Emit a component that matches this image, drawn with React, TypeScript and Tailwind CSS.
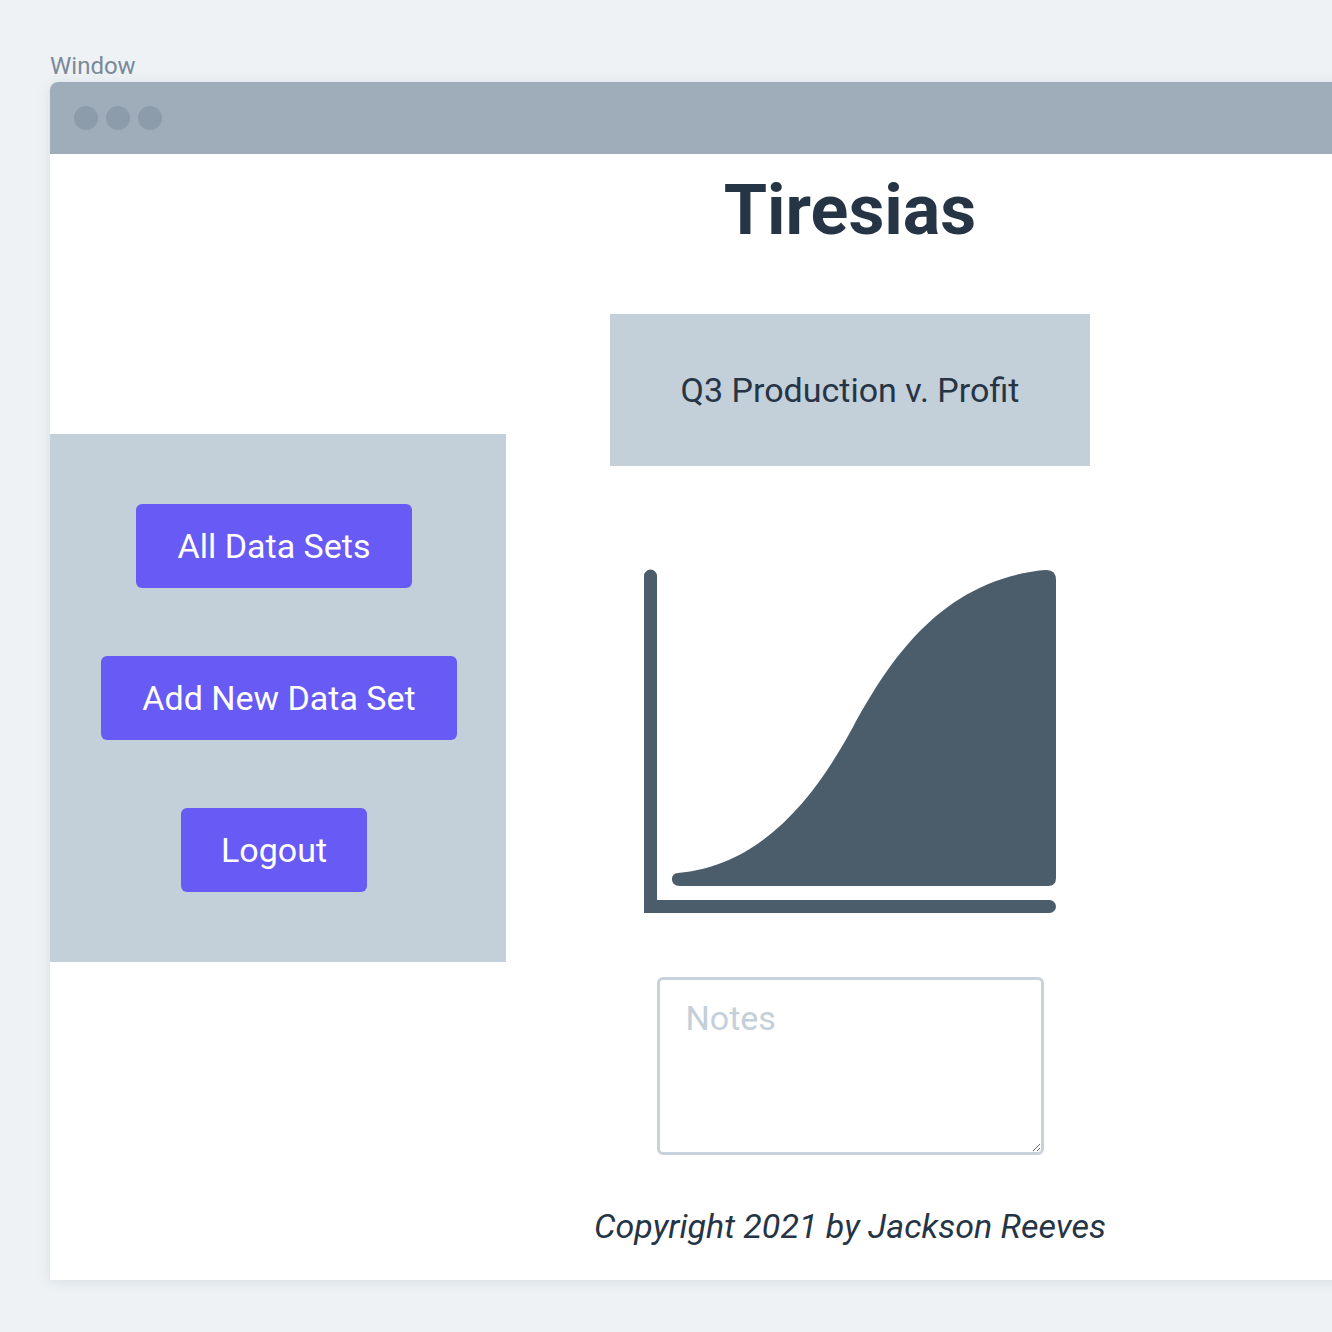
import React from "react";

export default function App() {
  return (
    <div
      className="w-[1332px] h-[1332px] overflow-hidden bg-[#eef2f5] pt-[51px]"
      style={{ fontFamily: "Roboto, 'Noto Sans', sans-serif" }}
    >
      <div className="ml-[50px] text-[24px] leading-[31px] text-[#7a8998]">Window</div>
      <div className="ml-[50px] w-[1400px] rounded-tl-[8px] bg-white shadow-[0_2px_14px_rgba(60,80,100,0.12)]">
        <div className="h-[72px] rounded-tl-[8px] bg-[#9eadb9] flex items-center pl-[24px] gap-[8px]">
          <div className="w-[24px] h-[24px] rounded-full bg-[#8d9cab]" />
          <div className="w-[24px] h-[24px] rounded-full bg-[#8d9cab]" />
          <div className="w-[24px] h-[24px] rounded-full bg-[#8d9cab]" />
        </div>
        <div className="flex h-[1126px]">
          <div className="w-[456px]">
            <div className="mt-[280px] h-[528px] bg-[#c3cfd9] flex flex-col items-center pt-[70px] gap-[68px]">
              <button className="mr-[8px] h-[84px] px-[42px] rounded-[6px] bg-[#675af5] text-white text-[34px] leading-none">
                All Data Sets
              </button>
              <button className="ml-[2px] h-[84px] px-[41px] rounded-[6px] bg-[#675af5] text-white text-[34px] leading-none">
                Add New Data Set
              </button>
              <button className="mr-[8px] h-[84px] px-[40px] rounded-[6px] bg-[#675af5] text-white text-[34px] leading-none">
                Logout
              </button>
            </div>
          </div>
          <div className="w-[688px] flex flex-col items-center">
            <h1 className="mt-[21px] h-[70px] text-[70px] leading-none font-bold text-[#263545]">Tiresias</h1>
            <div className="mt-[69px] w-[480px] h-[152px] bg-[#c3cfd9] flex items-center justify-center text-[34px] text-[#263545]">
              Q3 Production v. Profit
            </div>
            <svg className="mt-[94px]" width="420" height="360" viewBox="0 0 420 360">
              <path
                d="M10.5 16 V346.5 H409.5"
                fill="none"
                stroke="#4b5c6b"
                strokeWidth="13"
                strokeLinecap="round"
                strokeLinejoin="miter"
              />
              <path
                d="M38 313 C130 305, 183 222, 213 167 C248 103, 300 20, 405 10 Q416 9 416 20 V318 Q416 326 408 326 H40 Q32 326 32 319.5 Q32 313 38 313 Z"
                fill="#4b5c6b"
              />
            </svg>
            <textarea
              placeholder="Notes"
              className="mt-[57px] w-[387px] h-[178px] border-[3px] border-[#c9d2dc] rounded-[6px] px-[26px] pt-[18px] text-[34px] leading-[40px] text-[#263545] placeholder:text-[#c3cfd9] outline-none"
              style={{ fontFamily: "Roboto, 'Noto Sans', sans-serif" }}
            />
            <div className="mt-[51px] text-[34px] leading-[40px] italic text-[#263545]">
              Copyright 2021 by Jackson Reeves
            </div>
          </div>
        </div>
      </div>
    </div>
  );
}
